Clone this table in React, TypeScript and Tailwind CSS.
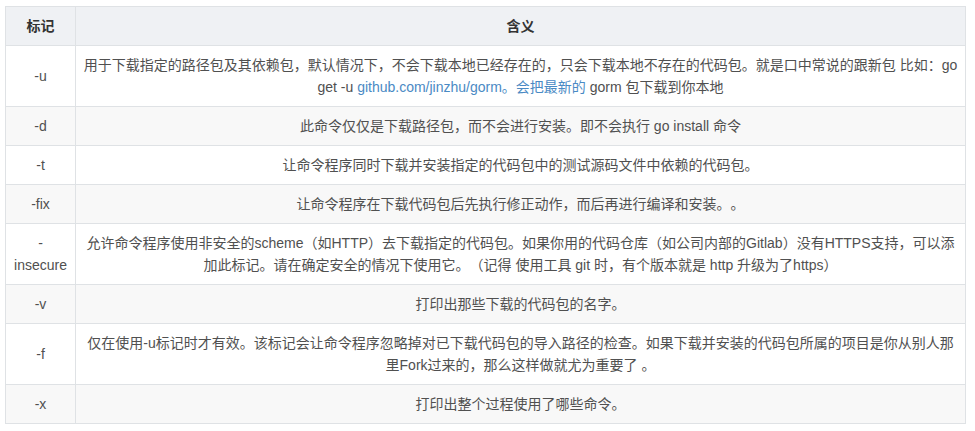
import React from 'react';

interface Flag {
  name: React.ReactNode;
  desc: React.ReactNode;
}

const link = 'text-[#4a8ac4]';

const flags: Flag[] = [
  {
    name: '-u',
    desc: (
      <>
        用于下载指定的路径包及其依赖包，默认情况下，不会下载本地已经存在的，只会下载本地不存在的代码包。就是口中常说的跟新包 比如：go
        <br />
        get -u <span className={link}>github.com/jinzhu/gorm。会把最新的</span> gorm 包下载到你本地
      </>
    ),
  },
  { name: '-d', desc: '此命令仅仅是下载路径包，而不会进行安装。即不会执行 go install 命令' },
  { name: '-t', desc: '让命令程序同时下载并安装指定的代码包中的测试源码文件中依赖的代码包。' },
  { name: '-fix', desc: '让命令程序在下载代码包后先执行修正动作，而后再进行编译和安装。。' },
  {
    name: (
      <>
        -<br />
        insecure
      </>
    ),
    desc: (
      <>
        允许命令程序使用非安全的scheme（如HTTP）去下载指定的代码包。如果你用的代码仓库（如公司内部的Gitlab）没有HTTPS支持，可以添
        <br />
        加此标记。请在确定安全的情况下使用它。（记得 使用工具 git 时，有个版本就是 http 升级为了https）
      </>
    ),
  },
  { name: '-v', desc: '打印出那些下载的代码包的名字。' },
  {
    name: '-f',
    desc: (
      <>
        仅在使用-u标记时才有效。该标记会让命令程序忽略掉对已下载代码包的导入路径的检查。如果下载并安装的代码包所属的项目是你从别人那
        <br />
        里Fork过来的，那么这样做就尤为重要了 。
      </>
    ),
  },
  { name: '-x', desc: '打印出整个过程使用了哪些命令。' },
];

export default function App() {
  return (
    <div
      className="w-[975px] h-[431px] bg-white pt-[6px] pl-[5px] text-[14px] leading-[22px] text-[#505050] [text-spacing-trim:space-all]"
      style={{ fontFamily: '"Liberation Sans", "Noto Sans CJK SC", sans-serif' }}
    >
      <table className="w-[961px] border-collapse table-fixed">
        <colgroup>
          <col className="w-[70px]" />
          <col />
        </colgroup>
        <thead>
          <tr className="bg-[#eff1f4]">
            <th className="border border-[#dfe2e5] px-1 py-2 text-center font-bold text-[#333]">标记</th>
            <th className="border border-[#dfe2e5] px-1 py-2 text-center font-bold text-[#333]">含义</th>
          </tr>
        </thead>
        <tbody>
          {flags.map((f, i) => (
            <tr key={i} className={i % 2 === 1 ? 'bg-[#f8f8f8]' : 'bg-white'}>
              <td className="border border-[#dfe2e5] px-1 py-2 text-center">{f.name}</td>
              <td className="border border-[#dfe2e5] px-1 py-2 text-center whitespace-nowrap">{f.desc}</td>
            </tr>
          ))}
        </tbody>
      </table>
    </div>
  );
}
